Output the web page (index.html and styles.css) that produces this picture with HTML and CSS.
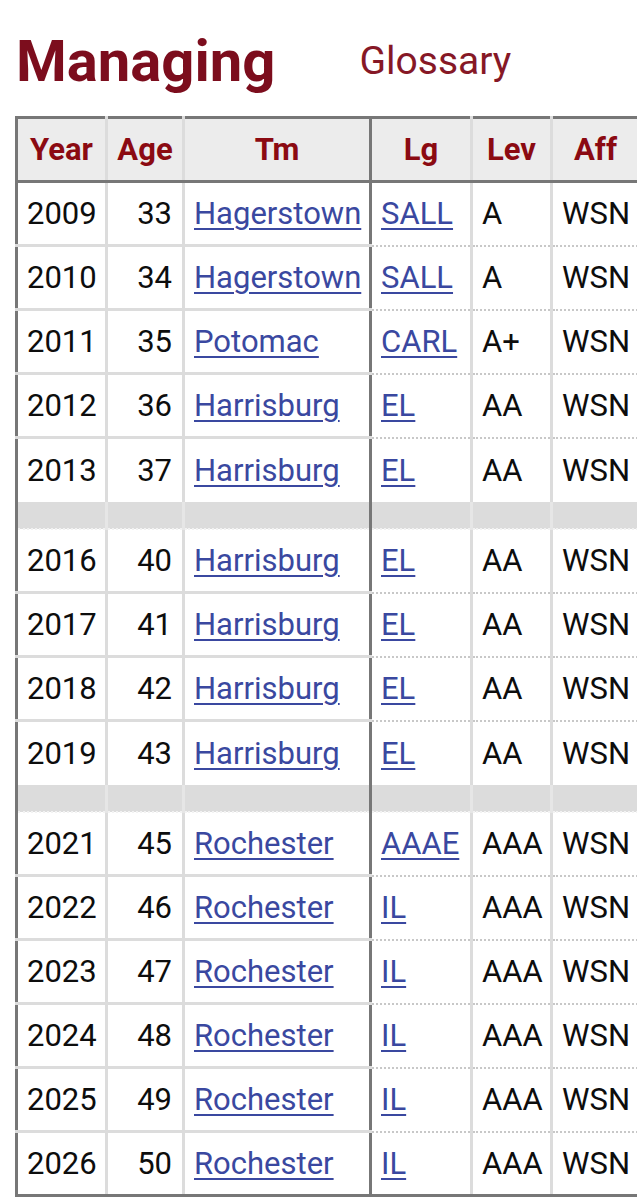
FILE: index.html
```html
<!DOCTYPE html>
<html>
	<head>
		<meta charset="utf-8">
		<title>Managing</title>
		<link rel="stylesheet" href="styles.css">
	</head>
	<body>
		<div class="section">
			<div class="section_heading">
				<h2>Managing</h2>
				<a class="glossary" href="#">Glossary</a>
			</div>
			<div class="table_wrap">
				<table class="stats_table">
					<colgroup>
						<col class="c_year">
						<col class="c_age">
						<col class="c_tm">
						<col class="c_lg">
						<col class="c_lev">
						<col class="c_aff">
					</colgroup>
					<thead>
						<tr>
							<th class="fixed">Year</th>
							<th class="fixed">Age</th>
							<th class="fixed last_fixed">Tm</th>
							<th>Lg</th>
							<th>Lev</th>
							<th>Aff</th>
						</tr>
					</thead>
					<tbody>
						<tr>
							<td class="fixed">2009</td>
							<td class="fixed right">33</td>
							<td class="fixed last_fixed"><a href="#">Hagerstown</a></td>
							<td><a href="#">SALL</a></td>
							<td>A</td>
							<td>WSN</td>
						</tr>
						<tr>
							<td class="fixed">2010</td>
							<td class="fixed right">34</td>
							<td class="fixed last_fixed"><a href="#">Hagerstown</a></td>
							<td><a href="#">SALL</a></td>
							<td>A</td>
							<td>WSN</td>
						</tr>
						<tr>
							<td class="fixed">2011</td>
							<td class="fixed right">35</td>
							<td class="fixed last_fixed"><a href="#">Potomac</a></td>
							<td><a href="#">CARL</a></td>
							<td>A+</td>
							<td>WSN</td>
						</tr>
						<tr>
							<td class="fixed">2012</td>
							<td class="fixed right">36</td>
							<td class="fixed last_fixed"><a href="#">Harrisburg</a></td>
							<td><a href="#">EL</a></td>
							<td>AA</td>
							<td>WSN</td>
						</tr>
						<tr class="before_spacer">
							<td class="fixed">2013</td>
							<td class="fixed right">37</td>
							<td class="fixed last_fixed"><a href="#">Harrisburg</a></td>
							<td><a href="#">EL</a></td>
							<td>AA</td>
							<td>WSN</td>
						</tr>
						<tr class="spacer">
							<td class="fixed"></td>
							<td class="fixed"></td>
							<td class="fixed last_fixed"></td>
							<td></td>
							<td></td>
							<td></td>
						</tr>
						<tr>
							<td class="fixed">2016</td>
							<td class="fixed right">40</td>
							<td class="fixed last_fixed"><a href="#">Harrisburg</a></td>
							<td><a href="#">EL</a></td>
							<td>AA</td>
							<td>WSN</td>
						</tr>
						<tr>
							<td class="fixed">2017</td>
							<td class="fixed right">41</td>
							<td class="fixed last_fixed"><a href="#">Harrisburg</a></td>
							<td><a href="#">EL</a></td>
							<td>AA</td>
							<td>WSN</td>
						</tr>
						<tr>
							<td class="fixed">2018</td>
							<td class="fixed right">42</td>
							<td class="fixed last_fixed"><a href="#">Harrisburg</a></td>
							<td><a href="#">EL</a></td>
							<td>AA</td>
							<td>WSN</td>
						</tr>
						<tr class="before_spacer">
							<td class="fixed">2019</td>
							<td class="fixed right">43</td>
							<td class="fixed last_fixed"><a href="#">Harrisburg</a></td>
							<td><a href="#">EL</a></td>
							<td>AA</td>
							<td>WSN</td>
						</tr>
						<tr class="spacer">
							<td class="fixed"></td>
							<td class="fixed"></td>
							<td class="fixed last_fixed"></td>
							<td></td>
							<td></td>
							<td></td>
						</tr>
						<tr>
							<td class="fixed">2021</td>
							<td class="fixed right">45</td>
							<td class="fixed last_fixed"><a href="#">Rochester</a></td>
							<td><a href="#">AAAE</a></td>
							<td>AAA</td>
							<td>WSN</td>
						</tr>
						<tr>
							<td class="fixed">2022</td>
							<td class="fixed right">46</td>
							<td class="fixed last_fixed"><a href="#">Rochester</a></td>
							<td><a href="#">IL</a></td>
							<td>AAA</td>
							<td>WSN</td>
						</tr>
						<tr>
							<td class="fixed">2023</td>
							<td class="fixed right">47</td>
							<td class="fixed last_fixed"><a href="#">Rochester</a></td>
							<td><a href="#">IL</a></td>
							<td>AAA</td>
							<td>WSN</td>
						</tr>
						<tr>
							<td class="fixed">2024</td>
							<td class="fixed right">48</td>
							<td class="fixed last_fixed"><a href="#">Rochester</a></td>
							<td><a href="#">IL</a></td>
							<td>AAA</td>
							<td>WSN</td>
						</tr>
						<tr>
							<td class="fixed">2025</td>
							<td class="fixed right">49</td>
							<td class="fixed last_fixed"><a href="#">Rochester</a></td>
							<td><a href="#">IL</a></td>
							<td>AAA</td>
							<td>WSN</td>
						</tr>
						<tr class="last_row">
							<td class="fixed">2026</td>
							<td class="fixed right">50</td>
							<td class="fixed last_fixed"><a href="#">Rochester</a></td>
							<td><a href="#">IL</a></td>
							<td>AAA</td>
							<td>WSN</td>
						</tr>
					</tbody>
				</table>
			</div>
		</div>
	</body>
</html>
```

FILE: styles.css
```css
*{
    padding:0;
    margin:0;
    box-sizing:border-box;
}
body{
    font-family: Roboto, "Liberation Sans", sans-serif;
    background:#fff;
    color:#111;
}
.section{
    padding-top:26px;
}
.section_heading{
    display:flex;
    align-items:flex-start;
    padding-left:16px;
    height:90px;
}
.section_heading h2{
    font-size:58px;
    font-weight:700;
    line-height:70px;
    color:#7c0d1d;
}
.glossary{
    margin-left:84px;
    margin-top:15px;
    font-size:39px;
    line-height:40px;
    color:#861826;
    text-decoration:none;
}
.table_wrap{
    overflow:hidden;
    width:100%;
}
.stats_table{
    margin-left:15px;
    width:623px;
    table-layout:fixed;
    border-collapse:collapse;
    font-size:31px;
    border-top:3px solid #777;
    border-left:3px solid #777;
    border-bottom:3px solid #777;
}
.c_year{ width:90px; }
.c_age{ width:77px; }
.c_tm{ width:187px; }
.c_lg{ width:101px; }
.c_lev{ width:80px; }
.c_aff{ width:88px; }

.stats_table th{
    height:64px;
    background:#ececec;
    color:#8b0a12;
    font-weight:700;
    text-align:center;
    border-bottom:3px solid #777;
    border-right:3px solid #dcdcdc;
    padding:0 2px;
}
.stats_table td{
    height:64px;
    padding:0 10px 0 9px;
    text-align:left;
    white-space:nowrap;
    color:#0d0d0d;
    border-right:3px solid #dcdcdc;
    border-bottom:2px dotted #c8c8c8;
}
.stats_table td.fixed{
    border-bottom:3px solid #dcdcdc;
}
.stats_table td.right{
    text-align:right;
}
.stats_table .last_fixed{
    border-right:3px solid #777;
}
.stats_table th.last_fixed{
    border-right:3px solid #777;
}
.stats_table a{
    color:#3a48a0;
    text-decoration:underline;
    text-decoration-thickness:2px;
    text-underline-offset:4px;
}
.stats_table .spacer td{
    height:27px;
    background:#dcdcdc;
    border-right:3px solid #e6e6e6;
    border-bottom:2px dotted #f2f2f2;
}
.stats_table .spacer td.last_fixed{
    border-right:3px solid #777;
}
.stats_table .before_spacer td{
    border-bottom:none;
}
.stats_table .last_row td{
    border-bottom:3px solid #777;
}
```
